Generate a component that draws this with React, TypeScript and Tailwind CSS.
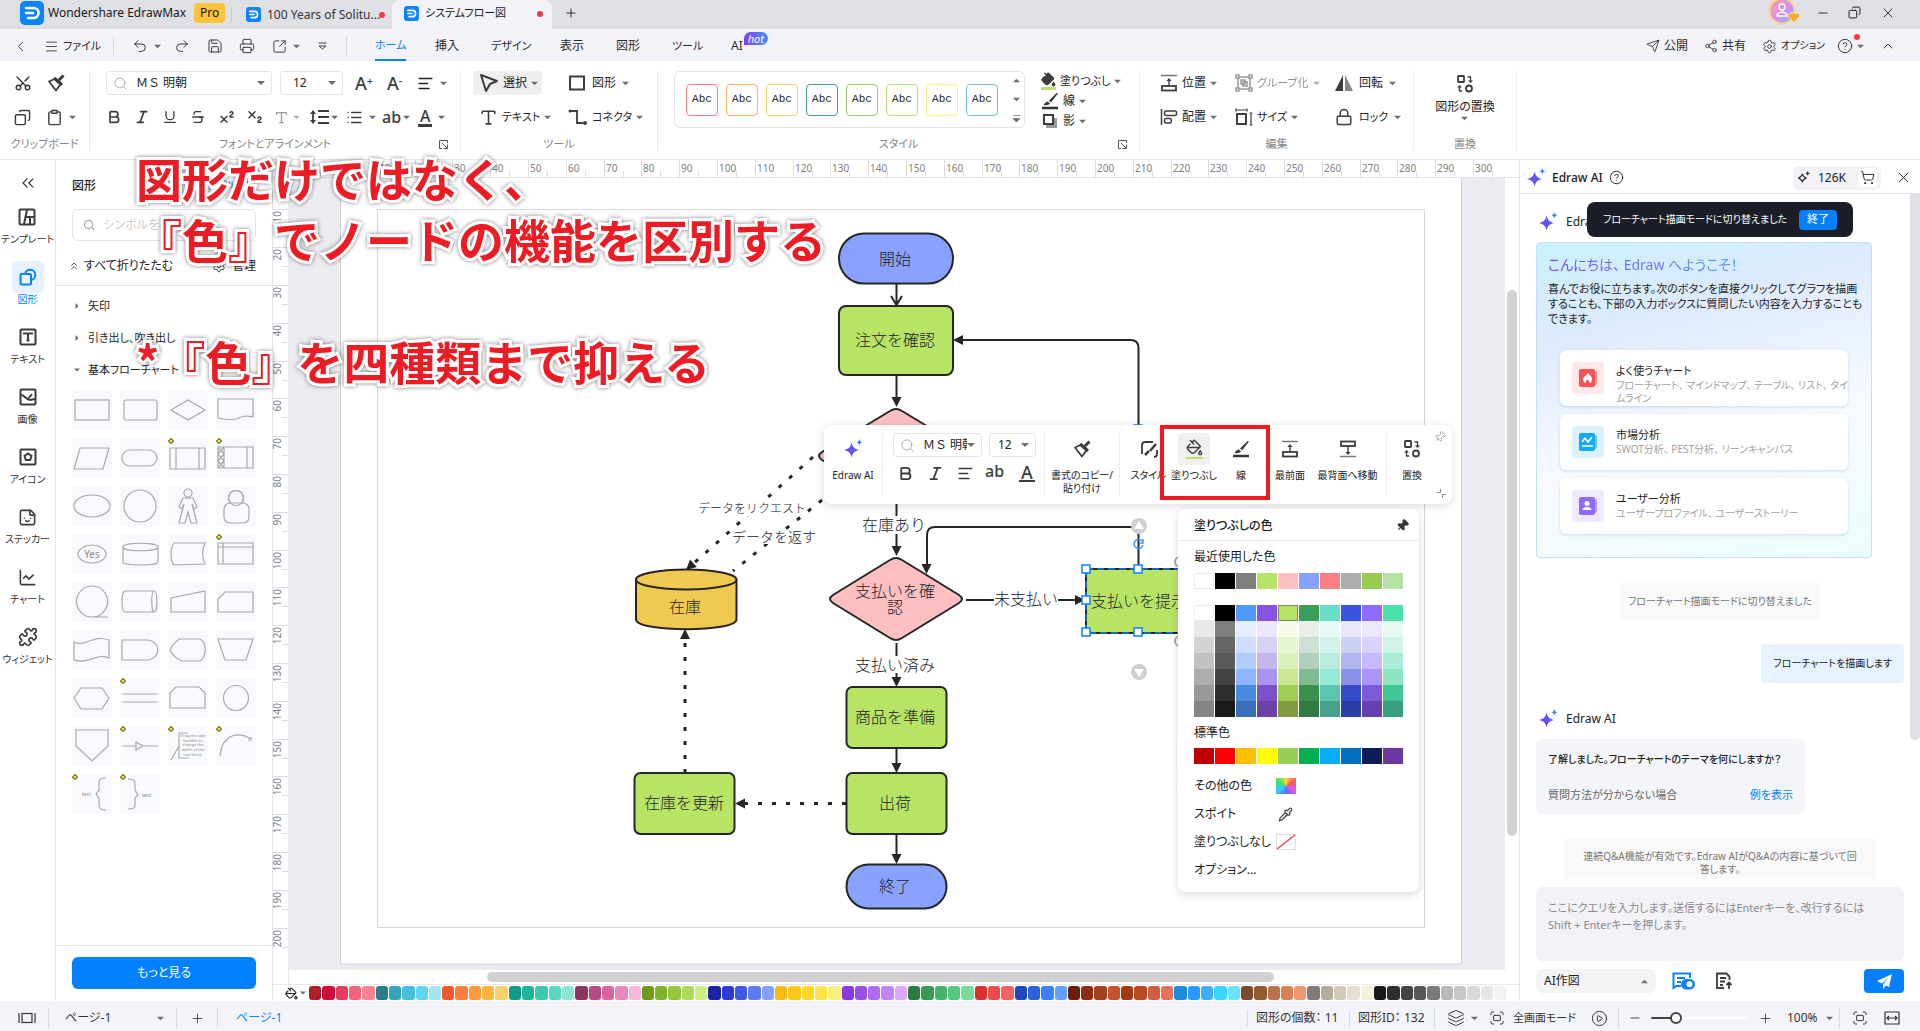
import type { ReactNode } from "react";
import {
  AlignLeft,
  AlignStartVertical,
  Bold,
  ChartLine,
  ChevronLeft,
  ChevronsLeft,
  ChevronsUp,
  ChevronUp,
  CircleHelp,
  CirclePlay,
  Clipboard,
  Copy,
  Fullscreen,
  Italic,
  Layers,
  List,
  Lock,
  Menu,
  Minus,
  PaintBucket,
  Pin,
  Pipette,
  Plus,
  Printer,
  Puzzle,
  Redo2,
  Save,
  Scissors,
  Search,
  Send,
  Settings,
  Share2,
  ShoppingCart,
  SquareArrowOutUpRight,
  Sticker,
  Strikethrough,
  Subscript,
  Superscript,
  Type,
  Underline,
  Undo2,
  X,
} from "lucide-react";

const recentColors = [
  "#ffffff", "#000000", "#7f7f7f", "#b8e466", "#fdbfc2", "#8aa2ff", "#fa8085", "#adadad", "#97cc53", "#b9e0a5",
];

const themeColors = [
  "#ffffff", "#000000", "#5198fb", "#8553e0", "#b8e466", "#3b9e5a", "#6adec8", "#3a54e0", "#8f6bfb", "#4be2aa",
  "#e8e8e8", "#7f7f7f", "#e6eeff", "#ece6fa", "#f5fbe6", "#e8efe9", "#e6f9f5", "#e6e8fa", "#ede7fe", "#e6faf2",
  "#d3d3d3", "#666666", "#cdddff", "#d9d1f4", "#e6f5cf", "#cee0d3", "#d1f3ea", "#cdd1f4", "#dbd1fd", "#cff3e6",
  "#c1c1c1", "#595959", "#b0ccff", "#c5b5ee", "#daf0b8", "#b1d0b9", "#b9ecdf", "#b0b5f2", "#c8b8fe", "#a8eed6",
  "#adadad", "#434343", "#8fb5fd", "#ab94f0", "#cae793", "#80bb91", "#95ead6", "#8890ea", "#ac93f7", "#8be5bf",
  "#999999", "#2e2e2e", "#4689dd", "#7c52cb", "#9dce55", "#38914f", "#5ec3af", "#344cca", "#7f5ad8", "#41c695",
  "#858585", "#1a1a1a", "#386fb9", "#6b42a6", "#809c40", "#2e7c44", "#47a18c", "#2a3ea6", "#673fae", "#36a07c",
];

const standardColors = [
  "#c00000", "#ff0000", "#ffc000", "#ffff00", "#98ce54", "#00b050", "#09adf9", "#006fc0", "#0d1d56", "#6b39a0",
];

const stripColors = [
  "#b01e28", "#cc0f3c", "#e83c5e", "#f0647d", "#f4828f",
  "#2b7d8e", "#36a3b8", "#47c0dc", "#5ed6f0", "#a2e6f6",
  "#f2582c", "#fa7f3c", "#f99a3b", "#fbb43f", "#fcd068",
  "#11998a", "#1fb59c", "#38c9ae", "#59d8c1", "#8be6d3",
  "#8e3566", "#b84a80", "#d965a0", "#e887bd", "#f8b8d8",
  "#6f9c1c", "#7fb32a", "#96c63d", "#aedb55", "#cdee86",
  "#1b22a6", "#2b3bd1", "#4057e8", "#5c7cf4", "#84a2fb",
  "#f6ba15", "#fbc71e", "#fdd62b", "#fee446", "#fcee7c",
  "#8a38df", "#9b4ee9", "#ae6af0", "#bf86f4", "#dba8fb",
  "#2b7c3a", "#3a9a50", "#45b368", "#52c97d", "#7ddb9a",
  "#e03131", "#ea4b4b", "#f26464", "#1f48c0", "#2e60dd",
  "#4080f5", "#5ea0fb", "#6e1d0b", "#8c2c14", "#a63e20",
  "#c2532f", "#a33a12", "#bb4922",
  "#d25e3e", "#e3735a",
  "#1b8be0", "#2e98ff", "#40afff", "#38d3ff", "#69e4ff",
  "#7a4b2c", "#93592f", "#b9714e", "#d98052", "#e99a6f",
  "#827b7b", "#b5ac9c", "#d4cab9", "#e6dfd0", "#f4f2d8",
  "#1a1a1a", "#2e2e2e", "#434343", "#575757", "#7b7b7b", "#b9b9bb", "#c8c8ca", "#d8d8d9", "#e6e6e8", "#f2f2f2", "#ffffff",
];

const abcStyles = [
  "border-[#f77f7a]",
  "border-[#fbaf67]",
  "border-[#fbd075]",
  "border-[#479c86]",
  "border-[#9bcb5c]",
  "border-[#b5e07a]",
  "border-[#fbf07d]",
  "border-[#74bfcf]",
];

const Caret = ({ up = false, size = 7 }: { up?: boolean; size?: number }) => (
  <svg width={size} height={size} viewBox="0 0 8 8" className="shrink-0 pointer-events-none">
    <path d={up ? "M0 6h8L4 2z" : "M0 2h8L4 6z"} fill="#6d6d6d" />
  </svg>
);

const Stars = ({ size = 22 }: { size?: number }) => (
  <svg width={size} height={size} viewBox="0 0 22 22" className="shrink-0">
    <defs>
      <linearGradient id="starFill" x1="0" y1="1" x2="1" y2="0">
        <stop offset="0.2" stopColor="#7a3ff5" />
        <stop offset="1" stopColor="#1f8cff" />
      </linearGradient>
    </defs>
    <path
      d="M9.500 3.500c1 5 2.500 7 8 8.500-5.500 1.500-7 3.500-8 8.500-1-5-2.500-7-8.500-8.500 6-1.500 7.500-3.500 8.500-8.500zM18 0c.4 2.300 1.200 3.200 3.500 3.700-2.300.5-3.100 1.400-3.500 3.700-.4-2.300-1.200-3.200-3.500-3.700C16.800 3.200 17.600 2.300 18 0z"
      fill="url(#starFill)"
    />
  </svg>
);

const Logo = ({ size }: { size: number }) => (
  <svg width={size} height={size} viewBox="0 0 24 24" className="shrink-0">
    <rect width="24" height="24" rx="5" fill="#0a84ff" />
    <path d="M6 7h7.500a5 5 0 0 1 0 10H8M6 12h7" fill="none" stroke="#fff" strokeWidth="2.600" strokeLinecap="round" />
  </svg>
);

const Brush = ({ size = 20 }: { size?: number }) => (
  <svg width={size} height={size} viewBox="0 0 20 20" fill="none" stroke="#3c3c3c" strokeWidth="1.800" strokeLinejoin="round">
    <path d="M3 8.500 9.500 5.500l5.500 5-5 7z" />
    <path d="M8 5l8 7M13 7l4.500-4.500" strokeWidth="3" />
  </svg>
);

const Pen = ({ bar = "#333" }: { bar?: string }) => (
  <svg width="18" height="18" viewBox="0 0 18 18">
    <path d="M15.500 1 8 8.500l2 2L17 1.500zM7 9.500c-2 0-3 1.500-4.500 3.500 3 .5 5.500 0 6.500-1.500z" fill="#3c3c3c" />
    <path d="M1 16h16" stroke={bar} strokeWidth="2.500" />
  </svg>
);

const SwapIcon = ({ size = 18 }: { size?: number }) => (
  <svg width={size} height={size} viewBox="0 0 18 18" fill="none" stroke="#3c3c3c" strokeWidth="1.800">
    <rect x="2" y="1" width="6" height="6" rx="0.500" />
    <circle cx="13" cy="13.500" r="3" />
    <path d="M11.500 2h3v4M6 16H3.500v-4" strokeWidth="1.300" />
    <path d="M12 5.500h5l-2.500 2.500zM1 12.500h5L3.500 10z" fill="#3c3c3c" stroke="none" />
  </svg>
);

const ToFront = ({ flip = false }: { flip?: boolean }) => (
  <svg width="18" height="18" viewBox="0 0 18 18" className={flip ? "rotate-180" : ""} fill="none" stroke="#3c3c3c">
    <path d="M1 1.500h16" strokeWidth="1.500" stroke="#777" />
    <rect x="2" y="12" width="14" height="4.500" strokeWidth="1.800" />
    <path d={flip ? "M9 12V4" : "M9 12V6"} strokeWidth="1.400" />
    <path d={flip ? "M6.500 6h5L9 3z" : "M6.500 7h5L9 4z"} fill="#3c3c3c" stroke="none" />
  </svg>
);

const Letter = ({ children }: { children: ReactNode }) => (
  <span className="text-lg leading-5 font-medium text-[#3c3c3c]">{children}</span>
);

interface ToolProps {
  label: string;
  children: ReactNode;
  text?: string;
  caret?: boolean;
  className?: string;
}

// Icon button, optionally followed by its caption and a drop-down caret
const Tool = ({ label, children, text, caret, className = "" }: ToolProps) => (
  <button
    type="button"
    aria-label={label}
    className={`flex h-6 shrink-0 items-center whitespace-nowrap ${className}`}
  >
    {children}
    {text && <span>{text}</span>}
    {caret && <Caret />}
  </button>
);

const Group = ({
  title,
  className,
  launcher,
  children,
}: {
  title: string;
  className: string;
  launcher?: boolean;
  children: ReactNode;
}) => (
  <section className={`relative flex h-20 shrink-0 flex-col border-r border-[#ececf0] ${className}`}>
    <div className="h-[66px]">{children}</div>
    <h2 className="text-center text-[11px] leading-[14px] text-[#858585]">{title}</h2>
    {launcher && (
      <button type="button" aria-label={`${title} 詳細`} className="absolute right-3 bottom-0.5">
        <svg width="9" height="9" viewBox="0 0 9 9" fill="none" stroke="#555">
          <path d="M3 8.500H.5v-8h8V3M3 3l5 5M8.500 4.500v4h-4" />
        </svg>
      </button>
    )}
  </section>
);

const TitleBar = () => (
  <header className="flex h-[29px] shrink-0 items-center bg-[#dfe0e4] text-xs">
    <div className="flex h-full w-[231px] items-center gap-1 pb-1 pl-5">
      <Logo size={24} />
      <span>Wondershare EdrawMax</span>
      <span className="ml-1 rounded bg-[#fdc23e] px-1.5 leading-5">Pro</span>
    </div>
    <div className="flex h-4 w-[161px] items-center gap-1.5 border-l border-[#c9cacf] pl-3.5">
      <Logo size={15} />
      <span className="w-[106px] whitespace-nowrap text-[#333]">100 Years of Solitu...</span>
      <i className="size-1.5 shrink-0 rounded-full bg-[#f0393e]" />
    </div>
    <div className="flex h-full w-40 items-center gap-1.5 rounded-t-lg bg-[#f2f3f8] pb-0.5 pl-3">
      <Logo size={15} />
      <span className="w-[106px] text-[11px]">システムフロー図</span>
      <i className="size-1.5 shrink-0 rounded-full bg-[#f0393e]" />
    </div>
    <button type="button" aria-label="新しいタブ" className="mb-1 ml-3">
      <Plus size={14} strokeWidth={1.500} />
    </button>
    <div className="ml-auto flex items-center gap-4 pr-6 pb-1">
      <svg width="32" height="28" viewBox="0 0 32 28">
        <defs>
          <linearGradient id="avatar" x1="0" y1="0" x2="1" y2="1">
            <stop offset="0" stopColor="#ff9f8f" />
            <stop offset="0.550" stopColor="#d88cf5" />
            <stop offset="1" stopColor="#6fc6ff" />
          </linearGradient>
        </defs>
        <circle cx="14" cy="12" r="12.500" fill="url(#avatar)" stroke="#fcd38a" strokeWidth="2" />
        <circle cx="14" cy="8" r="3" fill="none" stroke="#fff" strokeWidth="1.500" />
        <path d="M9 17c0-5 10-5 10 0z" fill="none" stroke="#fff" strokeWidth="1.500" />
        <path d="M22 14h8l2 3-6 7-6-7z" fill="#fcab1c" stroke="#fff" strokeWidth="0.600" />
      </svg>
      <button type="button" aria-label="最小化" className="w-4">
        <Minus size={14} strokeWidth={1.500} />
      </button>
      <button type="button" aria-label="元に戻す" className="w-4">
        <Copy size={13} strokeWidth={1.800} className="-scale-x-100" />
      </button>
      <button type="button" aria-label="閉じる" className="w-4">
        <X size={16} strokeWidth={1.300} />
      </button>
    </div>
  </header>
);

const MenuBar = () => (
  <nav className="flex h-8 shrink-0 items-center bg-[#f2f3f8] pt-0.5 text-xs text-[#2a2a2a]">
    <Tool label="戻る" className="ml-3 w-8"><ChevronLeft size={17} strokeWidth={1.300} /></Tool>
    <Tool label="ファイル" text="ファイル" className="h-[18px]! w-[70px] gap-1 border-r border-[#d5d6dc] text-[11px]">
      <Menu size={15} strokeWidth={1.300} />
    </Tool>
    <Tool label="元に戻す" caret className="ml-4.5 w-[42px] gap-1.5"><Undo2 size={16} strokeWidth={1.400} /></Tool>
    <Tool label="やり直し" className="w-[33px]"><Redo2 size={16} strokeWidth={1.400} /></Tool>
    <Tool label="保存" className="w-8"><Save size={16} strokeWidth={1.400} /></Tool>
    <Tool label="印刷" className="w-[33px]"><Printer size={16} strokeWidth={1.400} /></Tool>
    <Tool label="書き出し" caret className="w-[46px] gap-1.5"><SquareArrowOutUpRight size={15} strokeWidth={1.400} /></Tool>
    <Tool label="その他" className="h-[18px]! w-[29px] border-r border-[#d5d6dc]">
      <svg width="9" height="9" viewBox="0 0 9 9" fill="none" stroke="#444"><path d="M.5 1h8M1 4l3.500 3L8 4z" /></svg>
    </Tool>
    <a href="#home" className="ml-7 flex h-full w-[60px] items-center text-[#0a80ff]">
      <span className="flex h-full items-center border-b-2 border-[#0a80ff] text-[11px]">ホーム</span>
    </a>
    <a href="#insert" className="w-14">挿入</a>
    <a href="#design" className="w-[69px] text-[11px]">デザイン</a>
    <a href="#view" className="w-14">表示</a>
    <a href="#shape" className="w-14">図形</a>
    <a href="#tool" className="w-[59px] text-[11px]">ツール</a>
    <a href="#ai" className="flex items-center">
      AI
      <span className="mb-4 ml-px rounded-lg rounded-bl-none bg-linear-to-r from-[#7a3ff5] to-[#3f8cff] px-1 text-[11px] leading-[13px] text-white italic">
        hot
      </span>
    </a>
    <div className="ml-auto flex items-center gap-4 pr-6">
      <Tool label="公開" text="公開" className="gap-1"><Send size={14} strokeWidth={1.400} /></Tool>
      <Tool label="共有" text="共有" className="gap-1"><Share2 size={14} strokeWidth={1.400} /></Tool>
      <Tool label="オプション" text="オプション" className="gap-1 text-[10px]"><Settings size={15} strokeWidth={1.400} /></Tool>
      <Tool label="ヘルプ" caret className="relative -ml-1 gap-1">
        <CircleHelp size={16} strokeWidth={1.400} />
        <i className="absolute top-0 right-1 size-1.5 rounded-full bg-[#f9393e]" />
      </Tool>
      <Tool label="リボンを折りたたむ"><ChevronUp size={16} strokeWidth={1.400} /></Tool>
    </div>
  </nav>
);

const FontBox = ({ name, className }: { name: string; className: string }) => (
  <label className={`flex h-6 items-center rounded border border-[#e3e4e9] px-1.5 ${className}`}>
    <Search size={15} strokeWidth={1.500} className="shrink-0 text-[#aaa]" />
    <select
      aria-label="フォント"
      className="min-w-0 flex-1 appearance-none bg-transparent pl-2 text-xs outline-none [font-feature-settings:normal]"
    >
      <option>{name}</option>
    </select>
    <Caret size={8} />
  </label>
);

const SizeBox = ({ className }: { className: string }) => (
  <label className={`flex h-6 items-center rounded border border-[#e3e4e9] pr-1.5 ${className}`}>
    <select aria-label="フォントサイズ" className="min-w-0 flex-1 appearance-none bg-transparent text-xs outline-none">
      <option>12</option>
    </select>
    <Caret size={8} />
  </label>
);

const Ribbon = () => (
  <div className="flex h-[99px] shrink-0 overflow-hidden border-b border-[#e8e8ed] bg-white pt-2.5 text-xs text-[#222]">
    <Group title="クリップボード" className="w-[90px]">
      <div className="grid grid-cols-[32px_40px] gap-y-2.5 pl-3.5">
        <Tool label="切り取り"><Scissors size={18} className="-rotate-90 text-[#3c3c3c]" /></Tool>
        <Tool label="書式のコピー"><Brush /></Tool>
        <Tool label="コピー"><Copy size={17} className="-scale-x-100 text-[#3c3c3c]" /></Tool>
        <Tool label="貼り付け" caret className="gap-1.5"><Clipboard size={17} className="text-[#3c3c3c]" /></Tool>
      </div>
    </Group>

    <Group title="フォントとアラインメント" className="w-[371px]" launcher>
      <div className="flex pl-4">
        <FontBox name="ＭＳ 明朝" className="w-[166px]" />
        <SizeBox className="ml-2 w-[63px] pl-3" />
        <Tool label="文字を拡大" className="ml-3 w-8"><Letter>A<sup className="text-[11px]">+</sup></Letter></Tool>
        <Tool label="文字を縮小" className="w-7.5"><Letter>A<sup className="text-[11px]">-</sup></Letter></Tool>
        <Tool label="配置" caret className="gap-1.5"><AlignLeft size={17} /></Tool>
      </div>
      <div className="mt-2.5 flex pl-4 text-[#3c3c3c]">
        <Tool label="太字" className="w-7"><Bold size={16} strokeWidth={2.500} /></Tool>
        <Tool label="斜体" className="w-7"><Italic size={16} strokeWidth={2.500} /></Tool>
        <Tool label="下線" className="w-7"><Underline size={16} /></Tool>
        <Tool label="取り消し線" className="w-7"><Strikethrough size={16} /></Tool>
        <Tool label="上付き" className="w-7"><Superscript size={18} /></Tool>
        <Tool label="下付き" className="w-7"><Subscript size={18} /></Tool>
        <Tool label="文字飾り" caret className="w-9 gap-1 opacity-50"><Type size={15} /></Tool>
        <Tool label="行間" caret className="w-9 gap-0.5">
          <svg width="19" height="16" viewBox="0 0 19 16" stroke="currentColor" fill="none" strokeWidth="1.800">
            <path d="M8 2h11M8 8h11M8 14h11M3 3v10" />
            <path d="M0 5l3-4 3 4zM0 11l3 4 3-4z" fill="currentColor" stroke="none" />
          </svg>
        </Tool>
        <Tool label="箇条書き" caret className="w-9 gap-1.5"><List size={17} /></Tool>
        <Tool label="文字の間隔" caret className="w-9 gap-0.5"><span className="text-base font-medium">ab</span></Tool>
        <Tool label="文字色" caret className="w-9 gap-1.5">
          <span className="border-b-[3px] border-[#3c3c3c] px-0.5 text-base leading-4 font-medium">A</span>
        </Tool>
      </div>
    </Group>

    <Group title="ツール" className="w-[197px]">
      <div className="grid grid-cols-[95px_1fr] gap-y-2.5 pl-3">
        <Tool label="選択" text="選択" caret className="w-[69px] gap-1 rounded bg-[#efeff0] pl-1.5">
          <svg width="20" height="20" viewBox="0 0 20 20" fill="none" stroke="#3c3c3c" strokeWidth="2" strokeLinejoin="round"><path d="M2 2l16 6-7 3-4 7z" /></svg>
        </Tool>
        <Tool label="図形" text="図形" caret className="gap-1.5">
          <svg width="18" height="16" viewBox="0 0 18 16"><rect x="2" y="1.500" width="14" height="13" fill="none" stroke="#3c3c3c" strokeWidth="2" /></svg>
        </Tool>
        <Tool label="テキスト" text="テキスト" caret className="gap-1 pl-1.5 text-[11px]"><Type size={19} className="text-[#3c3c3c]" /></Tool>
        <Tool label="コネクタ" text="コネクタ" caret className="gap-1 text-[11px]">
          <svg width="20" height="18" viewBox="0 0 20 18" fill="none" stroke="#3c3c3c" strokeWidth="1.800">
            <path d="M2 3h7v12h6" /><circle cx="2" cy="3" r="1.500" fill="#3c3c3c" stroke="none" /><circle cx="17" cy="15" r="2" fill="#3c3c3c" stroke="none" />
          </svg>
        </Tool>
      </div>
    </Group>

    <Group title="スタイル" className="w-[482px]" launcher>
      <div className="flex pl-4">
        <div className="flex h-[57px] w-[351px] items-center gap-2 rounded-md border border-[#e3e4e9] pl-[11px]">
          {abcStyles.map((border) => (
            <button
              key={border}
              type="button"
              className={`size-8 rounded border bg-white font-['Liberation_Mono',monospace] text-[11px] ${border}`}
            >
              Abc
            </button>
          ))}
          <div className="ml-auto flex flex-col items-center gap-3 pr-1">
            <Caret up />
            <Caret />
            <svg width="7" height="8" viewBox="0 0 8 9"><path d="M0 .5h8M0 4h8L4 8z" fill="#6d6d6d" stroke="#6d6d6d" strokeWidth="0.800" /></svg>
          </div>
        </div>
        <div className="ml-4 flex flex-col">
          <Tool label="塗りつぶし" text="塗りつぶし" caret className="h-5! gap-1 text-[11px]">
            <span className="border-b-[3px] border-[#b8e466]"><PaintBucket size={15} className="fill-[#3c3c3c] text-[#3c3c3c]" /></span>
          </Tool>
          <Tool label="線" text="線" caret className="h-5! gap-1"><Pen /></Tool>
          <Tool label="影" text="影" caret className="h-5! gap-1">
            <svg width="18" height="16" viewBox="0 0 18 16"><path d="M5 5h11v10H5z" fill="#999" /><path d="M3 2h9v9H3z" fill="#fff" stroke="#3c3c3c" strokeWidth="2" /></svg>
          </Tool>
        </div>
      </div>
    </Group>

    <Group title="編集" className="w-[274px]">
      <div className="grid grid-cols-[75px_100px_1fr] gap-y-2.5 pl-5">
        <Tool label="位置" text="位置" caret className="gap-1"><ToFront /></Tool>
        <Tool label="グループ化" text="グループ化" caret className="gap-1 text-[11px] opacity-50">
          <svg width="18" height="18" viewBox="0 0 18 18" fill="none" stroke="#333" strokeWidth="1.500">
            <rect x="3" y="3" width="12" height="12" /><rect x="6" y="6" width="4" height="4" /><rect x="8" y="8" width="4" height="4" />
            <path d="M1 1h3v3H1zM14 1h3v3h-3zM1 14h3v3H1zM14 14h3v3h-3z" fill="#fff" />
          </svg>
        </Tool>
        <Tool label="回転" text="回転" caret className="gap-1.5">
          <svg width="18" height="18" viewBox="0 0 18 18"><path d="M8 1v16H0z" fill="#3c3c3c" /><path d="M10 1v16h8z" fill="#888" /></svg>
        </Tool>
        <Tool label="配置" text="配置" caret className="gap-1"><AlignStartVertical size={18} className="text-[#3c3c3c]" /></Tool>
        <Tool label="サイズ" text="サイズ" caret className="gap-1 text-[11px]">
          <svg width="18" height="18" viewBox="0 0 18 18" fill="none" stroke="#3c3c3c">
            <rect x="2" y="6" width="9" height="10" strokeWidth="2" /><path d="M1 2h11M1 .5v3M12 .5v3M16 5v12M14.500 5h3M14.500 17h3" strokeWidth="1.200" />
          </svg>
        </Tool>
        <Tool label="ロック" text="ロック" caret className="gap-1.5 text-[11px]"><Lock size={18} className="text-[#3c3c3c]" /></Tool>
      </div>
    </Group>

    <Group title="置換" className="w-[103px]">
      <button type="button" className="mx-auto flex flex-col items-center pt-1 leading-4">
        <SwapIcon />
        <span className="mt-1.5">図形の置換</span>
        <Caret />
      </button>
    </Group>
  </div>
);

const railItems = [
  {
    label: "テンプレート",
    icon: <svg width="18" height="18" viewBox="0 0 18 18" fill="none" stroke="currentColor" strokeWidth="2"><rect x="1.500" y="1.500" width="15" height="15" rx="1" /><path d="M9 2 6 16M8 9h8M12 9v7" /></svg>,
  },
  {
    label: "図形",
    icon: <svg width="18" height="18" viewBox="0 0 18 18" fill="none" stroke="currentColor" strokeWidth="2"><rect x="1.500" y="6" width="10.500" height="10.500" rx="1" /><path d="M6 6a5.200 5.200 0 1 1 6 6" /></svg>,
  },
  {
    label: "テキスト",
    icon: <svg width="18" height="18" viewBox="0 0 18 18" fill="none" stroke="currentColor" strokeWidth="2"><rect x="1.500" y="1.500" width="15" height="15" rx="1" /><path d="M5 6.500V5.500h8v1M9 5.500v7M7.500 12.500h3" /></svg>,
  },
  {
    label: "画像",
    icon: <svg width="18" height="18" viewBox="0 0 18 18" fill="none" stroke="currentColor" strokeWidth="2"><rect x="1.500" y="1.500" width="15" height="15" rx="1" /><path d="M2 7c4 0 5 5 9 5l5-1M9 11l4-5" /></svg>,
  },
  {
    label: "アイコン",
    icon: <svg width="18" height="18" viewBox="0 0 18 18" fill="none" stroke="currentColor" strokeWidth="2"><rect x="1.500" y="1.500" width="15" height="15" rx="1" /><path d="M9 5.500l3.500 2.500-1.300 4H6.800L5.500 8z" /></svg>,
  },
  {
    label: "ステッカー",
    icon: <Sticker size={19} />,
  },
  { label: "チャート", icon: <ChartLine size={19} /> },
  { label: "ウィジェット", icon: <Puzzle size={20} /> },
];

const Rail = () => (
  <aside className="flex w-14 shrink-0 flex-col items-center border-r border-[#e3e4e9] text-[#3c3c3c]">
    <button type="button" aria-label="折りたたむ" className="mt-3 h-[29px]">
      <ChevronsLeft size={20} strokeWidth={1.500} className="-mt-2" />
    </button>
    {railItems.map((item) => (
      <button
        key={item.label}
        type="button"
        className={`flex h-[60px] shrink-0 flex-col items-center text-[10px] leading-[13px] whitespace-nowrap ${
          item.label === "図形" ? "text-[#0a80ff]" : "text-[#333]"
        }`}
      >
        <span
          className={`flex size-8 items-center justify-center rounded ${
            item.label === "図形" ? "bg-[#e6f2ff]" : "text-[#3c3c3c]"
          }`}
        >
          {item.icon}
        </span>
        {item.label}
      </button>
    ))}
  </aside>
);

const shapes: { art: ReactNode; dot?: boolean }[] = [
  { art: <rect x="3" y="10" width="34" height="20" /> },
  { art: <rect x="4" y="10" width="33" height="20" rx="2" /> },
  { art: <path d="M20 10 37 20 20 30 3 20z" /> },
  { art: <path d="M2 9h35v18c-9-2-11 0-17 2-6 1-10 1-18-1z" /> },
  { art: <path d="M8 10h29l-6 21H2z" /> },
  { art: <rect x="2" y="12" width="35" height="16" rx="8" /> },
  { art: <path d="M2 10h35v21H2zM8 10v21M31 10v21" />, dot: true },
  { art: <path d="M2 9h35v21H2zM8 9v21M31 9v21M2 9l6 7-6 7 6 7M8 9l-6 7 6 7-6 7" />, dot: true },
  { art: <ellipse cx="20" cy="20" rx="18" ry="11" /> },
  { art: <circle cx="20" cy="20" r="16" /> },
  { art: <path d="M20 3a4 4 0 1 1 0 8 4 4 0 0 1 0-8zM15 12h10l4 9-3 2-2-5 5 19h-6l-3-11-3 11h-6l5-19-2 5-3-2z" /> },
  { art: <g><circle cx="20" cy="12" r="7.500" /><rect x="8" y="17" width="25" height="20" rx="6" fill="#f8f9fd" /><circle cx="20" cy="12" r="7.500" /></g> },
  {
    art: (
      <g>
        <ellipse cx="20" cy="20" rx="14" ry="9" />
        <text x="20" y="24" textAnchor="middle" fontSize="10" fill="#8a8a8a" stroke="none">Yes</text>
      </g>
    ),
  },
  { art: <path d="M3 13c0-5 35-5 35 0v15c0 4-35 4-35 0zM3 13c0 5 35 5 35 0" /> },
  { art: <path d="M6 9h31c-3 6-3 15 0 21l-31 1C2 27 2 14 6 9z" /> },
  { art: <path d="M2 9h35v21H2zM7 9v21M2 13h35" />, dot: true },
  { art: <path d="M20 35a15.500 15.500 0 1 1 .1 0H36" /> },
  { art: <path d="M5 9h29c4 0 4 21 0 21H5c-4 0-4-21 0-21zM34 9c-3 0-3 21 0 21" /> },
  { art: <path d="M3 16 37 9v21H3z" /> },
  { art: <path d="M9 10h28v20H2V17z" /> },
  { art: <path d="M2 12c12 6 18-8 35-2v18c-12-6-20 7-35 2z" /> },
  { art: <path d="M2 10h26c13 2 13 18 0 20H2z" /> },
  { art: <path d="M12 9h20c7 4 7 17 0 22H14Q5 27 2 20 5 13 12 9z" /> },
  { art: <path d="M2 9h35l-7 21H9z" /> },
  { art: <path d="M9 10h21l7 10-7 11H9L2 20z" /> },
  { art: <path d="M3 16h34M3 24h34" />, dot: true },
  { art: <path d="M8 9h23l6 6v15H2V15z" /> },
  { art: <circle cx="20" cy="20" r="12.500" /> },
  { art: <path d="M4 4h32v16L20 35 4 20z" /> },
  { art: <path d="M3 20h13M24 20h14M16 16l7 4-7 4z" />, dot: true },
  {
    art: (
      <g>
        <path d="M20 7H11v25h10M11 20 3 34" />
        <text fontSize="4" fill="#8a8a8a" stroke="none" textAnchor="middle">
          <tspan x="25" y="11">Drag the side</tspan>
          <tspan x="25" y="16">handles to</tspan>
          <tspan x="25" y="20">change the</tspan>
          <tspan x="25" y="25">width of the</tspan>
          <tspan x="25" y="30">text block.</tspan>
        </text>
      </g>
    ),
    dot: true,
  },
  { art: <path d="M4 30C6 8 22 5 35 13M35 11v3h-3" />, dot: true },
  { art: <g><path d="M34 4c-6 0-7 1-7 6v6l-3 4 3 4v6c0 5 1 6 7 6" /><text x="10" y="22" fontSize="5" fill="#8a8a8a" stroke="none">text</text></g>, dot: true },
  { art: <g><path d="M8 5c6 0 7 1 7 5v6l3 5-3 3v6c0 4-1 5-7 5" /><text x="22" y="23" fontSize="5" fill="#8a8a8a" stroke="none">text</text></g>, dot: true },
];

const ShapePanel = () => (
  <aside className="flex w-[217px] shrink-0 flex-col border-r border-[#e3e4e9] text-xs text-[#222]">
    <div className="flex h-[49px] items-center justify-between px-4 pt-0.5">
      <h2 className="font-medium">図形</h2>
      <a href="#more" className="text-[10px] text-[#0a80ff]">シンボル作成</a>
    </div>
    <label className="mx-4 flex h-8 items-center gap-2 rounded-md border border-[#e3e4e9] px-2.5 text-[#999]">
      <Search size={14} />
      <input aria-label="シンボルを検索" placeholder="シンボルを検索" className="w-full bg-transparent outline-none" />
    </label>
    <div className="flex h-[45px] items-center border-b border-[#e3e4e9] px-4 pt-1.5">
      <Tool label="すべて折りたたむ" text="すべて折りたたむ" className="gap-1"><ChevronsUp size={12} strokeWidth={1.500} className="-ml-1" /></Tool>
      <Tool label="管理" text="管理" className="ml-auto gap-1.5"><Settings size={14} strokeWidth={1.500} /></Tool>
    </div>
    <ul className="mt-1 leading-8">
      {["矢印", "引き出し、吹き出し", "基本フローチャート"].map((name, i) => (
        <li key={name}>
          <button type="button" className="flex items-center gap-2 pl-[18px] text-[11px]">
            <span className={i < 2 ? "-rotate-90" : ""}><Caret size={6} /></span>
            {name}
          </button>
        </li>
      ))}
    </ul>
    <div className="mt-1 grid grid-cols-4 gap-2 px-4">
      {shapes.map(({ art, dot }, i) => (
        <button key={i} type="button" aria-label={`図形 ${i + 1}`} className="size-10 rounded bg-[#f8f9fd]">
          <svg width="40" height="40" viewBox="0 0 40 40" className="overflow-visible" fill="none" stroke="#a9a9a9" strokeWidth="1.200">
            {art}
            {dot && <path d="M3 .5 5.500 3 3 5.500.5 3z" fill="#fbf26a" stroke="#77732e" />}
          </svg>
        </button>
      ))}
    </div>
    <div className="mt-auto border-t border-[#e3e4e9] px-4 py-3 pt-[11px]">
      <button type="button" className="h-8 w-full rounded-md bg-[#0280ff] text-white">もっと見る</button>
    </div>
  </aside>
);

const range = (from: number, to: number) => Array.from({ length: to - from + 1 }, (_, i) => from + i);

const HRuler = () => (
  <svg width="1232" height="18" viewBox="273 160 1232 18" className="shrink-0" fontSize="10" fill="#808080">
    {range(-1, 30).map((n) => {
      const x = Math.round(340 + n * 37.8);
      return (
        <g key={n}>
          <path d={`M${x - 0.5} 160v18M${x + 18.5} 171v7`} stroke="#dcdce2" />
          <text x={x + 1} y="172">{Math.abs(n * 10)}</text>
        </g>
      );
    })}
  </svg>
);

const VRuler = () => (
  <div className="shrink-0 overflow-hidden border-r border-[#e8e8ed]">
    <svg width="15" height="806" viewBox="274 178 15 806" fontSize="10" fill="#808080">
      {range(1, 20).map((n) => {
        const y = Math.round(171.5 + n * 37.8);
        return (
          <g key={n}>
            <path d={`M273 ${y + 0.5}h16M283 ${y + 19.5}h6`} stroke="#dcdce2" />
            <text transform={`translate(282 ${y + 4}) rotate(-90)`} textAnchor="end" x={2}>{n * 10}</text>
          </g>
        );
      })}
    </svg>
  </div>
);

const ink = "#262626";
const green = "#b8e466";
const blue = "#8aa2ff";
const pink = "#fdbfc2";

const Arrow = ({ x, y, turn = 0 }: { x: number; y: number; turn?: number }) => (
  <path d="M0 0-5-10H5z" fill={ink} stroke="none" transform={`translate(${x} ${y}) rotate(${turn})`} />
);

const Label = ({ x, y, size = 16, children }: { x: number; y: number; size?: number; children: string }) => (
  <text x={x} y={y - 1} fontSize={size} textAnchor="middle" dominantBaseline="central" fill="#222" stroke="none">
    {children}
  </text>
);

const Handle = ({ x, y }: { x: number; y: number }) => (
  <rect x={x - 4} y={y - 4} width="8" height="8" fill="#fff" stroke="#0a80ff" strokeWidth="1.500" />
);

// Diagram coordinates start at the corner where both rulers meet
const Flowchart = () => (
  <svg
    width="1216"
    height="792"
    viewBox="289 178 1216 792"
    className="font-['Noto_Sans_CJK_JP',sans-serif] font-light [font-feature-settings:normal]"
    fill="none"
    stroke={ink}
    strokeWidth="2"
  >
    <rect x="340.500" y="170" width="1121" height="794" fill="#fff" stroke="#d0d0d4" strokeWidth="1" />
    <rect x="377.500" y="209.500" width="1047" height="718" stroke="#d6d6d6" strokeWidth="1" />

    <path d="M896.500 284v21M891 296l5.500 9 5.500-9M896.500 375v25M896.500 500v50M896.500 643v36M896.500 748v18M896.500 834v22" />
    <path d="M1138.500 430v-82q0-8-8-8H960M1138.500 569v-34q0-8-8-8H935q-8 0-8 8v34M966 600h112" />
    <path d="M685 773V640M846 803.500H745M813 457 693 564M822 500 733 571" strokeWidth="3" strokeDasharray="4 10" />
    <Arrow x={896.500} y={407} />
    <Arrow x={953} y={340} turn={90} />
    <Arrow x={896.500} y={556} />
    <Arrow x={926.500} y={574} />
    <Arrow x={896.500} y={687} />
    <Arrow x={896.500} y={773} />
    <Arrow x={896.500} y={864} />
    <Arrow x={1085} y={600} turn={-90} />
    <Arrow x={685} y={629} turn={180} />
    <Arrow x={735} y={803.500} turn={90} />
    <Arrow x={686} y={570} turn={48} />

    <rect x="839" y="233.500" width="114" height="50" rx="25" fill={blue} />
    <rect x="839" y="306" width="114" height="69" rx="7" fill={green} />
    <path d="M890 411q6-4 12 0l68 41q6 4 0 8l-68 41q-6 4-12 0l-68-41q-6-4 0-8z" fill={pink} />
    <path d="M890 560q6-4 12 0l57 35q6 4 0 8l-57 35q-6 4-12 0l-57-35q-6-4 0-8z" fill={pink} />
    <rect x="846.500" y="687" width="100" height="61" rx="6" fill={green} />
    <rect x="846.500" y="773" width="100" height="61" rx="6" fill={green} />
    <rect x="846.500" y="864.500" width="100" height="44" rx="22" fill={blue} />
    <rect x="634.500" y="773" width="100" height="61" rx="6" fill={green} />
    <g fill="#f0ca50">
      <path d="M636 579.500v40c0 13 100.500 13 100.500 0v-40" />
      <ellipse cx="686.250" cy="579.500" rx="50.250" ry="10" />
    </g>
    <rect x="1086" y="569" width="105" height="64" rx="6" fill={green} />
    <path d="M1086 569h105v64h-105z" stroke="#0a80ff" strokeDasharray="7 4" strokeWidth="1.500" />

    <g fill="#fff" stroke="none">
      <path d="M862 516h64v18h-64zM994 590h64v20h-64zM854 656h82v17h-82zM697 502h108v14H697zM733 530h84v14h-84z" />
    </g>
    <Label x={895} y={259}>開始</Label>
    <Label x={895} y={340}>注文を確認</Label>
    <Label x={894} y={525}>在庫あり</Label>
    <Label x={895} y={591}>支払いを確</Label>
    <Label x={895} y={607}>認</Label>
    <Label x={1026} y={599}>未支払い</Label>
    <Label x={1139} y={601}>支払いを提示</Label>
    <Label x={895} y={665}>支払い済み</Label>
    <Label x={895} y={717}>商品を準備</Label>
    <Label x={895} y={803}>出荷</Label>
    <Label x={895} y={886}>終了</Label>
    <Label x={684} y={803}>在庫を更新</Label>
    <Label x={685} y={607}>在庫</Label>
    <Label x={752} y={508} size={12}>データをリクエスト</Label>
    <Label x={774} y={537} size={14}>データを返す</Label>

    <Handle x={1086} y={569} />
    <Handle x={1138} y={569} />
    <Handle x={1086} y={600} />
    <Handle x={1086} y={632} />
    <Handle x={1138} y={632} />
    <Handle x={1138} y={429} />
    <circle cx="1180" cy="562" r="5" stroke="#aaa" />
    <circle cx="1180" cy="641" r="5" stroke="#aaa" />
    <path d="M1142 541a4.500 4.500 0 1 0 1 4M1143 539v4h-4" stroke="#3f97f5" strokeWidth="1.500" />
    <g fill="#cfcfd0" stroke="none">
      <circle cx="1139" cy="526" r="8" />
      <circle cx="1139" cy="672" r="8" />
      <path d="M1139 521l5 8h-10zM1139 677l5-8h-10z" fill="#fff" />
    </g>
  </svg>
);

const BigTool = ({
  text,
  className,
  active = false,
  children,
}: {
  text: string;
  className: string;
  active?: boolean;
  children: ReactNode;
}) => (
  <button type="button" className={`flex shrink-0 flex-col items-center text-[10px] leading-[13px] ${className}`}>
    <span className={`flex size-8 items-center justify-center rounded ${active ? "bg-[#f0f0f1]" : ""}`}>{children}</span>
    <span className="pt-1 whitespace-pre">{text}</span>
  </button>
);

const FloatingToolbar = () => (
  <div className="absolute top-[247px] left-[535px] flex h-[79px] w-[628px] rounded-lg bg-white py-2 text-[#222] shadow-[0_2px_10px_rgba(0,0,0,0.15)]">
    <BigTool text="Edraw AI" className="w-[59px] border-r border-[#ececf0]"><Stars size={20} /></BigTool>
    <div className="w-[162px] shrink-0 border-r border-[#ececf0] pl-2.5">
      <div className="flex gap-[7px]">
        <FontBox name="ＭＳ 明朝" className="w-[89px]" />
        <SizeBox className="w-[47px] pl-2" />
      </div>
      <div className="mt-1 flex text-[#3c3c3c]">
        <Tool label="太字" className="w-[30px] pl-1"><Bold size={17} strokeWidth={2.500} /></Tool>
        <Tool label="斜体" className="w-[30px] pl-1"><Italic size={17} strokeWidth={2.500} /></Tool>
        <Tool label="配置" className="w-[30px] pl-1"><AlignLeft size={17} /></Tool>
        <Tool label="文字の間隔" className="w-[30px] pb-1 pl-0.5"><span className="text-base font-medium">ab</span></Tool>
        <Tool label="文字色" className="w-[30px] pl-1.5"><span className="border-b-2 border-[#3c3c3c] px-0.5 text-lg leading-4 font-medium">A</span></Tool>
      </div>
    </div>
    <BigTool text={"書式のコピー/\n貼り付け"} className="w-[75px] border-r border-[#ececf0]"><Brush /></BigTool>
    <BigTool text="スタイル" className="w-[57px]">
      <svg width="18" height="18" viewBox="0 0 18 18" fill="none" stroke="#3c3c3c" strokeWidth="1.800">
        <path d="M2 14V5q0-3 3-3h8M17 10v4q0 3-3 3" /><path d="M16 4l-6 7M9 11l-4 4" strokeWidth="2.500" />
      </svg>
    </BigTool>
    <BigTool text="塗りつぶし" active className="w-[34px]">
      <span className="border-b-2 border-[#b8e466] pb-px"><PaintBucket size={17} className="text-[#3c3c3c]" /></span>
    </BigTool>
    <BigTool text="線" className="w-[60px]"><Pen /></BigTool>
    <BigTool text="最前面" className="w-[38px]"><ToFront /></BigTool>
    <BigTool text="最背面へ移動" className="w-[78px] border-r border-[#ececf0]"><ToFront flip /></BigTool>
    <BigTool text="置換" className="w-[50px]"><SwapIcon /></BigTool>
    <Pin size={12} strokeWidth={1.500} className="absolute top-1.5 right-1.5 rotate-45 text-[#888]" />
    <svg width="9" height="9" viewBox="0 0 9 9" className="absolute right-1.5 bottom-1.5" fill="none" stroke="#888"><path d="M3.500 0v3.500H0M5.500 9V5.500H9" /></svg>
    <div className="absolute top-0 left-[336px] h-[75px] w-[110px] border-4 border-[#ed1c24]" />
  </div>
);

const Swatches = ({ colors, className }: { colors: string[]; className: string }) => (
  <div className={`grid w-[209px] grid-cols-10 gap-x-px ${className}`}>
    {colors.map((color, i) => (
      <button
        key={i}
        type="button"
        aria-label={color}
        className={`h-4 ${color === "#ffffff" ? "border border-[#ececf0]" : ""} ${
          i === 4 && colors === themeColors ? "border border-[#7d8a62]" : ""
        }`}
        style={{ backgroundColor: color }}
      />
    ))}
  </div>
);

const ColorPanel = () => (
  <div className="absolute top-[331px] left-[889px] w-[241px] rounded-lg bg-white pb-2 text-xs leading-4 shadow-[0_3px_10px_rgba(0,0,0,0.15)]">
    <div className="flex h-8 items-center justify-between border-b border-[#ececf0] pt-0.5 pr-2.5 pl-4">
      <h2 className="font-medium">塗りつぶしの色</h2>
      <Pin size={13} className="rotate-45 fill-[#333] text-[#333]" />
    </div>
    <div className="px-4">
      <h3 className="mt-2">最近使用した色</h3>
      <Swatches colors={recentColors} className="mt-2" />
      <Swatches colors={themeColors} className="mt-4" />
      <h3 className="mt-2">標準色</h3>
      <Swatches colors={standardColors} className="mt-[7px]" />
      <div className="mt-2 grid grid-cols-[82px_1fr] items-center leading-7">
        <button type="button" className="text-left">その他の色</button>
        <span className="h-4 w-5 bg-[conic-gradient(#ffd93b,#ff5a5a,#d65cf5,#5a6cff,#35c8ff,#3fe06a,#ffd93b)]" />
        <button type="button" className="text-left">スポイト</button>
        <Pipette size={15} className="ml-0.5 text-[#444]" />
        <button type="button" className="text-left whitespace-nowrap">塗りつぶしなし</button>
        <svg width="20" height="16" viewBox="0 0 20 16"><rect x="0.500" y="0.500" width="19" height="15" fill="#fff" stroke="#ddd" /><path d="M1 15 19 1" stroke="#f03a3a" strokeWidth="1.200" /></svg>
        <button type="button" className="text-left">オプション...</button>
      </div>
    </div>
  </div>
);

const Canvas = () => (
  <main className="flex min-w-0 flex-1 flex-col">
    <div className="h-[18px] shrink-0 overflow-hidden border-b border-[#e3e4e9]"><HRuler /></div>
    <div className="flex min-h-0 flex-1 border-b border-[#e8e8ed]">
      <VRuler />
      <div className="flex min-w-0 flex-1 flex-col">
        <div className="flex min-h-0 flex-1">
          <div className="relative min-w-0 flex-1 overflow-hidden bg-[#ebebf1]">
            <Flowchart />
            <FloatingToolbar />
            <ColorPanel />
          </div>
          <div className="w-3.5 shrink-0 pl-0.5"><div className="mt-28 h-[69%] w-2.5 rounded-full bg-[#d0d1d3]" /></div>
        </div>
        <div className="h-3.5 shrink-0 pt-0.5"><div className="ml-[198px] h-2.5 w-[64%] rounded-full bg-[#d0d1d3]" /></div>
      </div>
    </div>
    <div className="flex h-4 shrink-0 items-center pl-3">
      <div className="flex w-6 shrink-0 items-center gap-0.5"><PaintBucket size={13} /><Caret size={6} /></div>
      <div className="flex flex-1 gap-px">
        {stripColors.map((color, i) => (
          <button key={i} type="button" aria-label={color} className="h-3.5 min-w-0 flex-1 rounded-[3px]" style={{ backgroundColor: color }} />
        ))}
      </div>
    </div>
  </main>
);

const topics = [
  {
    title: "よく使うチャート",
    text: "フローチャート、 マインドマップ、 テーブル、 リスト、 タイ\nムライン",
    tile: "bg-[#fee7e7] text-[#f65355]",
    mark: <path d="M9 4c3 3 4 4 4 6.500a5 5 0 0 1-2.500 4c0-2-.5-3-2-4-1.500 1-2 2-2 4A5 5 0 0 1 4 10.500C4 8 7 7 9 4z" fill="#fff" />,
  },
  {
    title: "市場分析",
    text: "SWOT分析、 PEST分析、 リーンキャンパス",
    tile: "bg-[#dbf1fe] text-[#12abf8]",
    mark: <path d="M3 9l3-4 3 4 4-5M3 13h11" stroke="#fff" strokeWidth="1.600" fill="none" />,
  },
  {
    title: "ユーザー分析",
    text: "ユーザープロファイル、 ユーザーストーリー",
    tile: "bg-[#eee9fe] text-[#8f6bfb]",
    mark: <path d="M8 4a2.500 2.500 0 1 1 0 5 2.500 2.500 0 0 1 0-5zM3.500 13c0-4 9-4 9 0z" fill="#fff" />,
  },
];

const AiPanel = () => (
  <aside className="relative flex w-[401px] shrink-0 flex-col border-l border-[#e3e4e9] text-xs text-[#222]">
    <div className="flex h-[34px] shrink-0 items-center gap-1.5 border-b border-[#e3e4e9] pt-0.5 pr-2 pl-1.5">
      <Stars size={20} />
      <h2 className="font-medium">Edraw AI</h2>
      <CircleHelp size={15} strokeWidth={1.500} />
      <div className="ml-auto flex h-6 items-center gap-2 rounded-md bg-[#f1f1f6] px-1">
        <svg width="13" height="13" viewBox="0 0 22 22" fill="none" stroke="#333" strokeWidth="2"><path d="M9 5c1 4 2 6 7 7-5 1-6 3-7 7-1-4-2-6-7-7 5-1 6-3 7-7zM18 1v6M15 4h6" /></svg>
        <span>126K</span>
        <button type="button" aria-label="購入" className="ml-1 rounded bg-white p-0.5"><ShoppingCart size={15} strokeWidth={1.500} /></button>
      </div>
      <button type="button" aria-label="閉じる" className="ml-2"><X size={17} strokeWidth={1.300} /></button>
    </div>

    <div className="flex min-h-0 flex-1 overflow-hidden">
      <div className="flex min-w-0 flex-1 flex-col pl-4">
        <div className="flex h-12 shrink-0 items-center gap-2 pt-2 pl-0.5"><Stars size={20} /><span>Edraw AI</span></div>
        <section className="mr-9.5 h-[316px] shrink-0 rounded border border-[#c3e0fb] bg-[linear-gradient(165deg,#c9f1fd_0%,#ddeafe_25%,#f7f9ff_60%,#ecfdfc_100%)] px-[11px] pt-3 whitespace-nowrap">
          <h3 className="w-max bg-linear-to-r from-[#7a3ff5] to-[#4f9cf8] bg-clip-text text-sm text-transparent">こんにちは、 Edraw へようこそ！</h3>
          <p className="mt-1.5 text-[11px] leading-[15px]">
            喜んでお役に立ちます。次のボタンを直接クリックしてグラフを描画
            <br />
            することも、下部の入力ボックスに質問したい内容を入力することも
            <br />
            できます。
          </p>
          <div className="mt-6 flex flex-col gap-2 px-3">
            {topics.map((topic) => (
              <button
                key={topic.title}
                type="button"
                className="flex h-14 items-center gap-3 overflow-hidden rounded-md bg-white px-3 text-left shadow-[0_1px_3px_rgba(80,130,200,0.25)]"
              >
                <span className={`flex size-8 shrink-0 items-center justify-center rounded ${topic.tile}`}>
                  <svg width="18" height="18" viewBox="0 0 18 18">
                    <rect x="4" y="2" width="14" height="14" rx="2" fill="currentColor" opacity="0.600" />
                    <rect width="16" height="18" rx="2" fill="currentColor" />
                    {topic.mark}
                  </svg>
                </span>
                <span className="h-[46px] pt-2 text-[11px] leading-4">
                  {topic.title}
                  <span className="block text-[10px] leading-[13px] whitespace-pre text-[#a2a2a2]">{topic.text}</span>
                </span>
              </button>
            ))}
          </div>
        </section>
        <p className="mt-[25px] mr-1.5 h-[37px] shrink-0 self-center rounded bg-[#f9f9fa] px-2 text-[10px] leading-[37px] text-[#777]">
          フローチャート描画モードに切り替えました
        </p>
        <p className="mt-6 mr-1.5 h-[39px] shrink-0 self-end rounded bg-[#e6f2ff] px-3 text-[10px] leading-[39px]">フローチャートを描画します</p>
        <div className="mt-6.5 flex h-[30px] shrink-0 items-start gap-2 pl-0.5"><Stars size={20} /><span className="leading-5">Edraw AI</span></div>
        <div className="h-[75px] w-[269px] shrink-0 rounded-md bg-[#f4f5f8] px-3 pt-3 text-[11px] leading-4 whitespace-nowrap">
          <p className="text-[10px] font-medium">了解しました。フローチャートのテーマを何にしますか？</p>
          <p className="mt-5 flex justify-between text-[#666]">
            質問方法が分からない場合
            <a href="#examples" className="text-[#0a80ff]">例を表示</a>
          </p>
        </div>
        <p className="mt-6 mr-8.5 ml-7 h-[41px] shrink-0 rounded-t bg-[#f9f9fa] pt-3 text-center text-[10px] leading-[13px] text-[#777]">
          連続Q&A機能が有効です。Edraw AIがQ&Aの内容に基づいて回
          <br />
          答します。
        </p>
      </div>
      <div className="w-2.5 shrink-0"><div className="h-[546px] rounded-b-full bg-[#e0e0e4]" /></div>
    </div>

    <div className="shrink-0 px-4 pb-2">
      <textarea
        aria-label="クエリ"
        placeholder={"ここにクエリを入力します。送信するにはEnterキーを、改行するには\nShift + Enterキーを押します。"}
        className="block h-[74px] w-full resize-none rounded-md bg-[#f1f1f6] px-3 py-3 text-[11px] leading-[17px] placeholder:text-[#8b8b8f]"
      />
      <div className="mt-2 flex h-6 items-center">
        <label className="flex h-6 w-[120px] items-center rounded-md bg-[#f3f3f6] px-2">
          <select aria-label="モード" className="flex-1 appearance-none bg-transparent outline-none"><option>AI作図</option></select>
          <Caret up />
        </label>
        <button type="button" aria-label="連続Q&A" className="ml-4">
          <svg width="23" height="18" viewBox="0 0 23 18" fill="none" stroke="#0a80ff" strokeWidth="2">
            <path d="M18 6V1.500H1.500V16l3-2H9M5 6h8M5 10h4" /><rect x="10" y="8" width="12" height="8.500" rx="4.200" fill="#0a80ff" /><circle cx="17.500" cy="12.200" r="3" fill="#fff" stroke="none" />
          </svg>
        </button>
        <button type="button" aria-label="ファイル" className="ml-5">
          <svg width="18" height="18" viewBox="0 0 18 18" fill="none" stroke="#3c3c3c" strokeWidth="1.800">
            <path d="M9 16H2V1.500h9.500l3 3V8M5 6h6M5 9.500h5M5 13h3M14 17v-6M11.500 13l2.500-2.500 2.500 2.500" />
          </svg>
        </button>
        <button type="button" aria-label="送信" className="ml-auto flex h-6 w-10 items-center justify-center rounded bg-[#0280ff] text-white">
          <svg width="15" height="15" viewBox="0 0 15 15"><path d="M15 0 0 7l5 2.500 6-5.500-5 6.500V15l3-3.500 3 1.500z" fill="#fff" /></svg>
        </button>
      </div>
    </div>

    <div className="absolute top-[42px] left-[67px] flex h-[35px] w-[266px] items-center justify-between rounded-lg bg-[#1b1e26] px-4 text-[10px] whitespace-nowrap text-white">
      フローチャート描画モードに切り替えました
      <button type="button" className="h-5 rounded bg-[#0280ff] px-2 text-[11px]">終了</button>
    </div>
  </aside>
);

const StatusBar = () => (
  <footer className="flex h-[30px] shrink-0 items-center bg-[#f3f4f9] pt-1 text-xs text-[#333]">
    <Tool label="ページ表示" className="h-5! w-[49px] justify-center border-r border-[#d9dae0] pl-1.5">
      <svg width="18" height="12" viewBox="0 0 18 12" fill="none" stroke="#333" strokeWidth="1.200"><rect x="4" y="1.500" width="10" height="9" /><path d="M1 1v10M17 1v10" /></svg>
    </Tool>
    <label className="flex h-5 w-32 items-center border-r border-[#d9dae0] pr-3 pl-4">
      <select aria-label="ページ" className="flex-1 appearance-none bg-transparent outline-none"><option>ページ-1</option></select>
      <Caret />
    </label>
    <Tool label="ページを追加" className="h-5! w-[41px] justify-center border-r border-[#d9dae0]"><Plus size={15} strokeWidth={1.300} /></Tool>
    <a href="#page-1" className="ml-4.5 text-[#0a80ff]">ページ-1</a>
    <div className="ml-auto flex items-center">
      <span className="w-[102px] border-l border-[#d9dae0] pl-2 whitespace-nowrap">図形の個数： 11</span>
      <span className="w-[85px] border-l border-[#d9dae0] pl-2 whitespace-nowrap">図形ID： 132</span>
      <Tool label="レイヤー" caret className="h-5! w-[55px] gap-1.5 border-l border-[#d9dae0] pl-3"><Layers size={18} strokeWidth={1.300} /></Tool>
      <Tool label="全画面モード" text="全画面モード" className="w-[102px] gap-2 text-[11px]"><Fullscreen size={16} strokeWidth={1.500} /></Tool>
      <Tool label="再生" className="h-5! w-7 border-r border-[#d9dae0]"><CirclePlay size={17} strokeWidth={1.400} /></Tool>
      <Tool label="縮小" className="w-8 justify-center"><Minus size={14} strokeWidth={1.500} /></Tool>
      <input
        type="range"
        aria-label="ズーム"
        defaultValue={23}
        className="h-0.5 w-24 appearance-none rounded bg-[linear-gradient(to_right,#444_25%,#fff_25%)] [&::-webkit-slider-thumb]:size-3 [&::-webkit-slider-thumb]:appearance-none [&::-webkit-slider-thumb]:rounded-full [&::-webkit-slider-thumb]:border-2 [&::-webkit-slider-thumb]:border-[#444] [&::-webkit-slider-thumb]:bg-white"
      />
      <Tool label="拡大" className="w-9 justify-center"><Plus size={15} strokeWidth={1.300} /></Tool>
      <Tool label="倍率" text="100%" caret className="h-5! w-[57px] gap-2 border-r border-[#d9dae0] pl-1">{null}</Tool>
      <Tool label="ページに合わせる" className="w-10 justify-center"><Fullscreen size={16} strokeWidth={1.500} /></Tool>
      <Tool label="幅に合わせる" className="mr-4 w-6 justify-center">
        <svg width="16" height="14" viewBox="0 0 16 14" fill="none" stroke="#333" strokeWidth="1.200"><path d="M1 1h14v12H1zM3 7h10M5 5 3 7l2 2M11 5l2 2-2 2" /></svg>
      </Tool>
    </div>
  </footer>
);

export default function App() {
  return (
    <div
      lang="ja"
      className="relative flex h-screen flex-col overflow-hidden bg-white font-['Noto_Sans','Noto_Sans_CJK_JP',sans-serif] text-[#1a1a1a] [font-feature-settings:'palt']"
    >
      <TitleBar />
      <MenuBar />
      <Ribbon />
      <div className="flex min-h-0 flex-1">
        <Rail />
        <ShapePanel />
        <Canvas />
        <AiPanel />
      </div>
      <StatusBar />
      <p className="pointer-events-none absolute top-[147px] left-[136px] font-['Noto_Sans_CJK_JP',sans-serif] text-[46px] leading-[61px] font-bold whitespace-pre text-[#ed1c24] drop-shadow-[0_0_2px_rgba(0,0,0,0.5)] [-webkit-text-stroke:6px_white] [font-feature-settings:normal] [paint-order:stroke_fill]">
        {"図形だけではなく、\n『色』でノードの機能を区別する\n\n*『色』を四種類まで抑える"}
      </p>
    </div>
  );
}
